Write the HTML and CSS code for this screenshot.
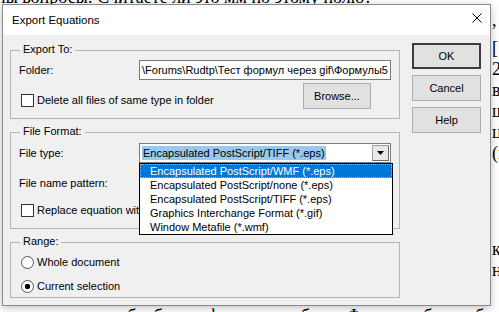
FILE: index.html
```html
<!DOCTYPE html>
<html>

<head>
    <meta charset="UTF-8">
    <meta name="viewport" content="width=device-width, initial-scale=1.0">
    <title>Export Equations</title>
    <link rel="stylesheet" href="styles.css">
</head>

<body>
    <div class="doc">
        <p class="line-top">ны вопросы: Считаете ли это мм по этому полю?</p>
        <div class="side">
            <p class="side-first">,</p>
            <p>[</p>
            <p>2</p>
            <p>в</p>
            <p>ш</p>
            <p>ц</p>
            <p>(в</p>
            <div class="side-gap"></div>
            <p>ко</p>
            <p>на</p>
        </div>
        <p class="line-bottom">нужно т обработать формулы, и будет Фотошоп бы удобнее ф</p>
    </div>

    <div class="dialog">
        <div class="titlebar">
            <span class="title">Export Equations</span>
            <svg class="close" width="10" height="10" viewBox="0 0 10 10">
                <path d="M0.5 0.5L9.5 9.5M9.5 0.5L0.5 9.5" stroke="#000" stroke-width="1" fill="none" />
            </svg>
        </div>

        <div class="dlg-body">
            <div class="groups">
                <div class="group group-export">
                    <span class="legend">Export To:</span>
                    <div class="row">
                        <span class="lbl">Folder:</span>
                        <div class="field">\Forums\Rudtp\Тест формул через gif\Формулы5</div>
                    </div>
                    <div class="row row-check">
                        <div class="check"><span class="box"></span>Delete all files of same type in folder</div>
                        <div class="btn btn-browse">Browse...</div>
                    </div>
                </div>

                <div class="group group-format">
                    <span class="legend">File Format:</span>
                    <div class="row">
                        <span class="lbl">File type:</span>
                        <div class="combo">
                            <span class="combo-sel">Encapsulated PostScript/TIFF (*.eps)</span>
                            <span class="combo-arrow">
                                <svg width="7" height="4" viewBox="0 0 7 4">
                                    <path d="M0 0H7L3.5 4Z" fill="#000" />
                                </svg>
                            </span>
                            <div class="list">
                                <div class="item item-on">Encapsulated PostScript/WMF (*.eps)</div>
                                <div class="item">Encapsulated PostScript/none (*.eps)</div>
                                <div class="item">Encapsulated PostScript/TIFF (*.eps)</div>
                                <div class="item">Graphics Interchange Format (*.gif)</div>
                                <div class="item">Window Metafile (*.wmf)</div>
                            </div>
                        </div>
                    </div>
                    <div class="row row-pattern">
                        <span class="lbl">File name pattern:</span>
                        <div class="field"></div>
                    </div>
                    <div class="check check-replace"><span class="box"></span>Replace equation wit</div>
                </div>

                <div class="group group-range">
                    <span class="legend">Range:</span>
                    <div class="radio"><span class="dot"></span>Whole document</div>
                    <div class="radio radio-second"><span class="dot dot-on"></span>Current selection</div>
                </div>
            </div>

            <div class="buttons">
                <div class="btn btn-default">OK</div>
                <div class="btn">Cancel</div>
                <div class="btn">Help</div>
            </div>
        </div>
    </div>
</body>

</html>
```

FILE: styles.css
```css
body {
    margin: 0;
    width: 499px;
    height: 312px;
    overflow: hidden;
    position: relative;
    background-color: #fff;
}

.doc {
    font-family: "Liberation Serif", "Times New Roman", serif;
    font-size: 18px;
    line-height: 21px;
    white-space: nowrap;
    color: #000;
}

.doc p {
    margin: 0;
}

.doc .line-top {
    margin: -13px 0 0 -4px;
}

.side {
    margin: 2px 0 0 492px;
}

.doc .side-first {
    margin-bottom: 7px;
}

.side-gap {
    height: 75px;
}

.doc .line-bottom {
    margin: 25px 0 0 52px;
}

.dialog {
    position: absolute;
    left: 2px;
    top: 4px;
    width: 489px;
    height: 302px;
    box-sizing: border-box;
    border: 1px solid #8a8a8a;
    background-color: #f0f0f0;
    box-shadow: 0 2px 8px rgba(0, 0, 0, 0.25);
    font-family: "Liberation Sans", Arial, sans-serif;
    font-size: 11px;
    color: #000;
}

.titlebar {
    height: 30px;
    background-color: #fff;
    display: flex;
    align-items: center;
    justify-content: space-between;
    padding: 0 8px 0 9px;
}

.title {
    font-size: 11.5px;
}

.close {
    margin-bottom: 4px;
}

.dlg-body {
    display: flex;
    gap: 12px;
    padding: 8px 8px 0 7px;
}

.groups {
    width: 390px;
    padding-top: 7px;
}

.group {
    position: relative;
    border: 1px solid #b4b4b4;
    padding: 9px 8px;
}

.group-format,
.group-range {
    margin-top: 13px;
}

.group-format {
    padding-top: 10px;
    padding-bottom: 11px;
}

.group-range {
    padding-top: 13px;
    padding-bottom: 4px;
}

.legend {
    position: absolute;
    top: -8px;
    left: 9px;
    padding: 0 3px;
    line-height: 13px;
    background-color: #f0f0f0;
}

.row {
    display: flex;
    align-items: center;
}

.lbl {
    width: 120px;
}

.field {
    width: 252px;
    height: 20px;
    box-sizing: border-box;
    border: 1px solid #7a7a7a;
    background-color: #fff;
    padding: 0 2px;
    line-height: 18px;
    white-space: nowrap;
    overflow: hidden;
}

.row-check {
    margin-top: 3px;
    align-items: flex-start;
}

.check {
    display: flex;
    align-items: center;
    gap: 3px;
    margin-left: 2px;
    line-height: 13px;
    white-space: nowrap;
}

.row-check .check {
    margin-top: 11px;
}

.check-replace {
    margin-top: 11px;
}

.box {
    width: 13px;
    height: 13px;
    box-sizing: border-box;
    border: 1px solid #333;
    background-color: #fff;
}

.btn {
    box-sizing: border-box;
    width: 69px;
    height: 26px;
    border: 1px solid #adadad;
    background-color: #e1e1e1;
    display: flex;
    align-items: center;
    justify-content: center;
}

.btn-browse {
    width: 68px;
    margin-left: auto;
    margin-right: 20px;
}

.btn-default {
    border: 2px solid #3c3c3c;
}

.buttons {
    display: flex;
    flex-direction: column;
    gap: 6px;
}

.combo {
    position: relative;
    width: 252px;
    height: 20px;
    box-sizing: border-box;
    border: 1px solid #7a7a7a;
    background-color: #fff;
    display: flex;
    align-items: center;
    padding: 0 1px 0 2px;
}

.combo-sel {
    background-color: #99c9ef;
    padding: 0 1px;
    line-height: 14px;
    white-space: nowrap;
}

.combo-arrow {
    margin-left: auto;
    width: 17px;
    height: 16px;
    box-sizing: border-box;
    border: 1px solid #a0a0a0;
    border-right-color: #696969;
    border-bottom-color: #696969;
    background-color: #e8e8e8;
    display: flex;
    align-items: center;
    justify-content: center;
}

.list {
    position: absolute;
    top: 19px;
    left: -1px;
    width: 252px;
    border: 1px solid #000;
    background-color: #fff;
    z-index: 2;
}

.item {
    height: 14px;
    line-height: 14px;
    padding-left: 10px;
    white-space: nowrap;
}

.item-on {
    background-color: #0078d7;
    color: #fff;
    outline: 1px dotted #ffa640;
    outline-offset: -1px;
}

.row-pattern {
    margin-top: 10px;
}

.radio {
    display: flex;
    align-items: center;
    gap: 3px;
    margin-left: 2px;
    line-height: 13px;
}

.radio-second {
    margin-top: 11px;
}

.dot {
    width: 13px;
    height: 13px;
    box-sizing: border-box;
    border: 1px solid #555;
    border-radius: 50%;
    background-color: #fff;
}

.dot-on {
    background: radial-gradient(circle, #000 0 2.5px, #fff 3px);
}
```
